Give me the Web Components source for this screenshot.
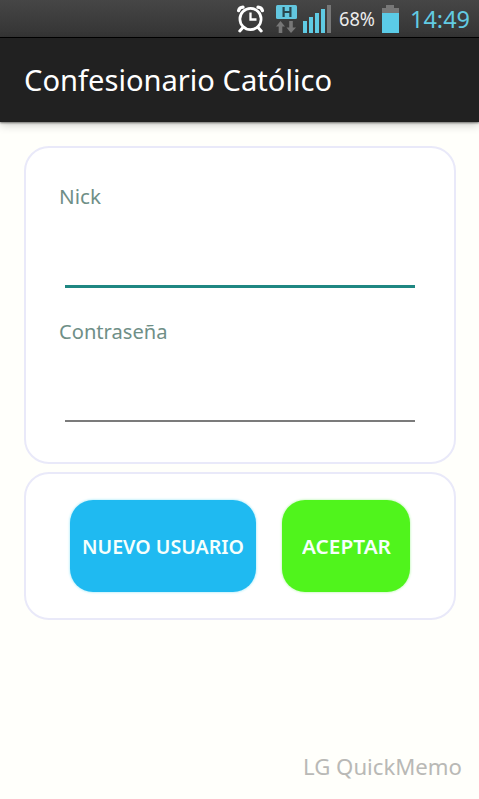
<!DOCTYPE html>
<html lang="es">
<head>
<meta charset="utf-8">
<title>Confesionario Católico</title>
<style>
html,body{margin:0;height:100%;overflow:hidden;background:#fffffb}
body{font-family:"Noto Sans","Open Sans",sans-serif}
</style>
</head>
<body>
<login-screen></login-screen>
<script>
const define = (name, html, ready) => customElements.define(name, class extends HTMLElement {
  constructor() {
    super();
    const t = document.createElement('template');
    t.innerHTML = html;
    this.attachShadow({mode: 'open'}).append(t.content.cloneNode(true));
  }
  connectedCallback() { if (ready) ready(this); }
});

// A single line of text condensed or widened to the width given in its "w" attribute.
define('fit-text', `<style>
:host{display:block;white-space:nowrap;line-height:1;flex:none}
span{display:inline-block;transform-origin:0 50%}
</style><span><slot></slot></span>`, el => {
  const w = +el.getAttribute('w'), s = el.shadowRoot.querySelector('span');
  el.style.width = w + 'px';
  s.style.transform = `scaleX(${w / s.getBoundingClientRect().width})`;
});

define('status-bar', `<style>
:host{display:flex;box-sizing:border-box;height:38px;padding-right:9px;justify-content:flex-end;align-items:flex-start;
background:linear-gradient(#464646,#3d3d3d 50%,#343434);border-bottom:1px solid #000}
svg{display:block;flex:none}
.pct{font-size:19.5px;color:#ececec;margin:9px 6px 0 8px}
.time{font-size:23.5px;color:#62cbe3;margin:8px 0 0 11px}
</style>
<svg width="29" height="38" viewBox="0 0 29 38" fill="none" stroke="#fff" stroke-linecap="round">
<circle cx="13.5" cy="19" r="10.6" stroke-width="2.7"/>
<path d="M13.5 12.5v7h6" stroke-width="2.3" stroke-linecap="butt"/>
<path d="M1.6 10.6Q2.4 7.4 6 7.2M25.4 10.6Q24.6 7.4 21 7.2" stroke-width="3.3"/>
<path d="M5.5 28l-2.7 3M21.5 28l2.7 3" stroke-width="3"/></svg>
<svg width="22" height="38" viewBox="0 0 22 38" style="margin-left:10px">
<rect x="0" y="5" width="21" height="14" rx="1.5" fill="#62c6df"/>
<path d="M7.6 7v10M14.4 7v10M7.6 12h6.8" fill="none" stroke="#29474f" stroke-width="2.2"/>
<path d="M4.5 21L9 26.5H6.3V33H2.7V26.5H0zM15 33l-4.5-5.5h2.7V21h3.6v6.5H20z" fill="#777"/></svg>
<svg width="28" height="38" viewBox="0 0 28 38" style="margin-left:5px" fill="#5fcbe4">
<rect x="0" y="21" width="4" height="12"/><rect x="6" y="17" width="4" height="16"/><rect x="12" y="13" width="4" height="20"/><rect x="18" y="9" width="4" height="24"/><rect x="24" y="5" width="4" height="28" fill="#777"/></svg>
<fit-text class="pct" w="36">68%</fit-text>
<svg width="18" height="38" viewBox="0 0 18 38"><path d="M5 5h8v3h5v6H1V8h4z" fill="#777"/><rect x="1" y="13" width="17" height="20" fill="#5bcbe7"/></svg>
<fit-text class="time" w="60">14:49</fit-text>`);

define('app-bar', `<style>
:host{display:flex;box-sizing:border-box;height:84px;padding-left:24px;background:#212121;color:#fff;
box-shadow:0 1px 2px rgba(0,0,0,.5),0 3px 9px rgba(0,0,0,.2);font-size:28.5px}
fit-text{margin-top:28px}
</style><fit-text w="308"><slot></slot></fit-text>`);

define('outlined-card', `<style>
:host{display:block;box-sizing:border-box;border:2px solid #e9e9f9;border-radius:25px;background:#fff}
</style><slot></slot>`);

define('text-field', `<style>
:host{display:flex;flex-direction:column;box-sizing:border-box;height:135px;font-size:20.5px;color:#6f8f87}
.line{box-sizing:border-box;margin:auto 6px 0;height:var(--line,2px);background:var(--line-color,#7b7b7b)}
</style><fit-text><slot></slot></fit-text><div class="line"></div>`, el => {
  const f = el.shadowRoot.querySelector('fit-text');
  f.setAttribute('w', el.getAttribute('w'));
});

define('round-button', `<style>
:host{display:flex;box-sizing:border-box;justify-content:center;height:92px;padding-top:36px;border-radius:23px;
color:#f6fffc;font-size:20.5px;font-weight:600;box-shadow:0 0 2px 1px var(--glow)}
</style><slot></slot>`);

define('login-screen', `<style>
:host{display:flex;flex-direction:column;height:799px;background:#fffffb}
main{display:flex;flex-direction:column;gap:8px;padding:24px 23px 0 24px}
.form{height:318px;padding:38px 33px 0}
.actions{display:block;height:148px}
.row{display:flex;gap:26px;padding:26px 0 0 44px}
.nick{height:102px;--line:3px;--line-color:#1f8782}
.pass{height:101px;margin-top:33px}
.new{width:186px;background:#1fbaf1;--glow:#c9f3fc}
.ok{width:128px;background:#50f41c;--glow:#d6fbd0}
.memo{margin:auto 17px 21px auto;font-size:22.5px;color:#b9b9b6}
</style>
<status-bar></status-bar>
<app-bar>Confesionario Católico</app-bar>
<main>
<outlined-card class="form">
<text-field class="nick" w="42">Nick</text-field>
<text-field class="pass" w="108.5">Contraseña</text-field>
</outlined-card>
<outlined-card class="actions"><div class="row">
<round-button class="new"><fit-text w="162">NUEVO USUARIO</fit-text></round-button>
<round-button class="ok"><fit-text w="89">ACEPTAR</fit-text></round-button>
</div></outlined-card>
</main>
<fit-text class="memo" w="159">LG QuickMemo</fit-text>`);

// Field labels receive their width from the field, so they are fitted once everything is in place.
const refit = root => root.querySelectorAll('*').forEach(e => {
  if (e.localName === 'fit-text') {
    const s = e.shadowRoot.querySelector('span'), w = +e.getAttribute('w');
    s.style.transform = 'none';
    e.style.width = w + 'px';
    s.style.transform = `scaleX(${w / s.getBoundingClientRect().width})`;
  }
  if (e.shadowRoot) refit(e.shadowRoot);
});
refit(document);
</script>
</body>
</html>
